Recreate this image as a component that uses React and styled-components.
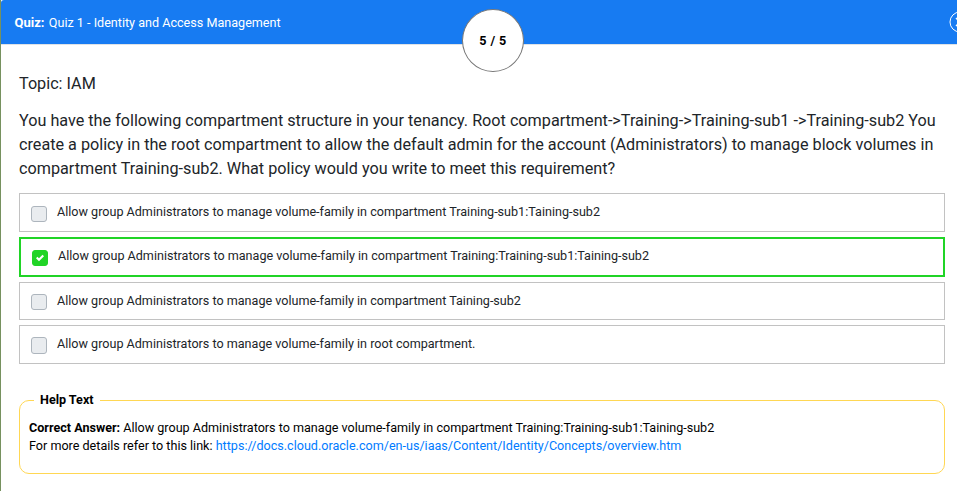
import React from "react";
import styled, { createGlobalStyle, css } from "styled-components";

const GlobalStyle = createGlobalStyle`
  *, *::before, *::after { box-sizing: border-box; }
  body {
    margin: 0;
    background: #fff;
    color: #212529;
    font-family: Roboto, "Liberation Sans", sans-serif;
    overflow: hidden;
  }
`;

const Page = styled.div`
  height: 491px;
  border-left: 1px solid #76915f;
  background: #fff;
  overflow: hidden;
`;

const Header = styled.header`
  position: relative;
  display: flex;
  align-items: center;
  height: 45px;
  padding: 0 0 1px 13.5px;
  border-bottom: 1px solid #dee2e6;
  border-top-left-radius: 3px;
  background: #177bf2;
  color: #fff;
  font-size: 12.6px;
`;

const QuizTitle = styled.div`
  padding-top: 3px;
  line-height: 20px;
  white-space: pre;

  b {
    margin-right: 1.2px;
    font-size: 13px;
  }
`;

const Counter = styled.div`
  position: absolute;
  top: 9px;
  left: 461px;
  display: flex;
  align-items: center;
  justify-content: center;
  width: 62px;
  height: 63px;
  border: 1px solid #777;
  border-radius: 50%;
  background: #fff;
  color: #000;
  font-size: 12.6px;
  font-weight: 700;
  letter-spacing: 0.4px;
`;

const CloseIcon = styled.svg`
  position: absolute;
  top: 11px;
  left: 947.5px;
  width: 22px;
  height: 22px;
`;

const Content = styled.main`
  padding: 27px 12px 0 18px;
`;

const Topic = styled.h1`
  margin: 0;
  font-size: 16.2px;
  font-weight: 400;
  line-height: 24px;
`;

const Question = styled.p`
  margin: 13px 0 0;
  font-size: 16.19px;
  line-height: 24px;
  white-space: nowrap;
`;

const Options = styled.div`
  display: flex;
  flex-direction: column;
  gap: 5px;
  margin-top: 12px;
`;

const Option = styled.label`
  display: flex;
  align-items: flex-start;
  height: ${(p) => p.$height}px;
  padding-left: 11px;
  border: ${(p) => (p.$selected ? "2px solid #20d426" : "1px solid #c2c2c2")};
  font-size: 12.59px;
`;

const Box = styled.span`
  display: flex;
  align-items: center;
  justify-content: center;
  width: 16px;
  height: ${(p) => p.$height || 16}px;
  margin-top: ${(p) => p.$top}px;
  border: 1px solid #adb5bd;
  border-radius: 3px;
  background: #e9ecef;
  ${(p) => p.$selected && css`
    border-color: #20d426;
    background: #20d426;
  `}
`;

const OptionText = styled.span`
  margin: ${(p) => p.$top}px 0 0 10px;
  line-height: 18px;
  white-space: nowrap;
`;

const Help = styled.fieldset`
  min-width: 0;
  height: 83px;
  margin: 27px 0 0;
  padding: 10px 9px 0;
  border: 1px solid #ffd754;
  border-radius: 10px;
  color: #000;
  font-size: 12.59px;
  line-height: 18px;
`;

const Legend = styled.legend`
  margin-left: 5px;
  padding: 0 6px;
  font-weight: 700;
`;

const HelpLine = styled.div`
  white-space: nowrap;
`;

const Link = styled.a`
  color: #007bff;
  text-decoration: none;
`;

const OPTIONS = [
  { text: "Allow group Administrators to manage volume-family in compartment Training-sub1:Taining-sub2", height: 39, boxTop: 12, textTop: 9 },
  { text: "Allow group Administrators to manage volume-family in compartment Training:Training-sub1:Taining-sub2", height: 40, boxTop: 11, textTop: 8, selected: true },
  { text: "Allow group Administrators to manage volume-family in compartment Taining-sub2", height: 38, boxTop: 11, textTop: 9 },
  { text: "Allow group Administrators to manage volume-family in root compartment.", height: 39, boxTop: 11, textTop: 9, boxHeight: 17 },
];

export default function App() {
  return (
    <>
      <GlobalStyle />
      <Page>
        <Header>
          <QuizTitle><b>Quiz:</b> Quiz 1 - Identity and Access Management</QuizTitle>
          <Counter>5 / 5</Counter>
          <CloseIcon viewBox="0 0 22 22" fill="none" stroke="#fff">
            <circle cx="11" cy="11" r="10" />
            <path d="M7 7l8 8M15 7l-8 8" strokeWidth="1.5" />
          </CloseIcon>
        </Header>
        <Content>
          <Topic>Topic: IAM</Topic>
          <Question>
            You have the following compartment structure in your tenancy. Root compartment-&gt;Training-&gt;Training-sub1 -&gt;Training-sub2 You<br />
            create a policy in the root compartment to allow the default admin for the account (Administrators) to manage block volumes in<br />
            compartment Training-sub2. What policy would you write to meet this requirement?
          </Question>
          <Options>
            {OPTIONS.map((o) => (
              <Option key={o.text} $height={o.height} $selected={o.selected}>
                <Box $top={o.boxTop} $height={o.boxHeight} $selected={o.selected}>
                  {o.selected && (
                    <svg width="8" height="8" viewBox="0 0 8 8" fill="#fff">
                      <path d="M6.564.75l-3.59 3.612-1.538-1.55L0 4.26l2.974 2.99L8 2.193z" />
                    </svg>
                  )}
                </Box>
                <OptionText $top={o.textTop}>{o.text}</OptionText>
              </Option>
            ))}
          </Options>
          <Help>
            <Legend>Help Text</Legend>
            <HelpLine><b>Correct Answer:</b> Allow group Administrators to manage volume-family in compartment Training:Training-sub1:Taining-sub2</HelpLine>
            <HelpLine>For more details refer to this link: <Link href="https://docs.cloud.oracle.com/en-us/iaas/Content/Identity/Concepts/overview.htm">https://docs.cloud.oracle.com/en-us/iaas/Content/Identity/Concepts/overview.htm</Link></HelpLine>
          </Help>
        </Content>
      </Page>
    </>
  );
}
